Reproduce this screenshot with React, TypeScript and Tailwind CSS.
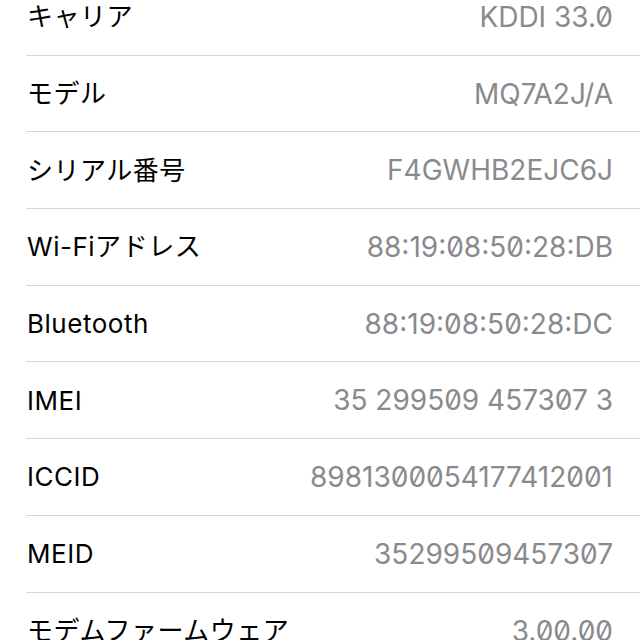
import React from 'react'

interface InfoRow {
  label: string
  value: string
}

const rows: InfoRow[] = [
  { label: 'キャリア', value: 'KDDI 33.0' },
  { label: 'モデル', value: 'MQ7A2J/A' },
  { label: 'シリアル番号', value: 'F4GWHB2EJC6J' },
  { label: 'Wi-Fiアドレス', value: '88:19:08:50:28:DB' },
  { label: 'Bluetooth', value: '88:19:08:50:28:DC' },
  { label: 'IMEI', value: '35 299509 457307 3' },
  { label: 'ICCID', value: '8981300054177412001' },
  { label: 'MEID', value: '35299509457307' },
  { label: 'モデムファームウェア', value: '3.00.00' }
]

const Row: React.FC<{ row: InfoRow; last: boolean }> = ({ row, last }) => (
  <div
    className={`ml-[26px] h-[76.7px] flex items-center justify-between pr-[27px] ${
      last ? '' : 'border-b border-[#d6d6da]'
    }`}
  >
    <span className="pl-px text-[26px] text-black font-['Inter','Noto_Sans_CJK_JP',sans-serif] tracking-[0.02em]">
      {row.label}
    </span>
    <span className="text-[28px] text-[#8a8a8e] font-['Inter','Noto_Sans_CJK_JP',sans-serif] slashed-zero">
      {row.value}
    </span>
  </div>
)

export default function App() {
  return (
    <div className="w-[640px] h-[640px] overflow-hidden bg-white">
      <div className="-mt-[21px]">
        {rows.map((row, i) => (
          <Row key={row.label} row={row} last={i === rows.length - 1} />
        ))}
      </div>
    </div>
  )
}
